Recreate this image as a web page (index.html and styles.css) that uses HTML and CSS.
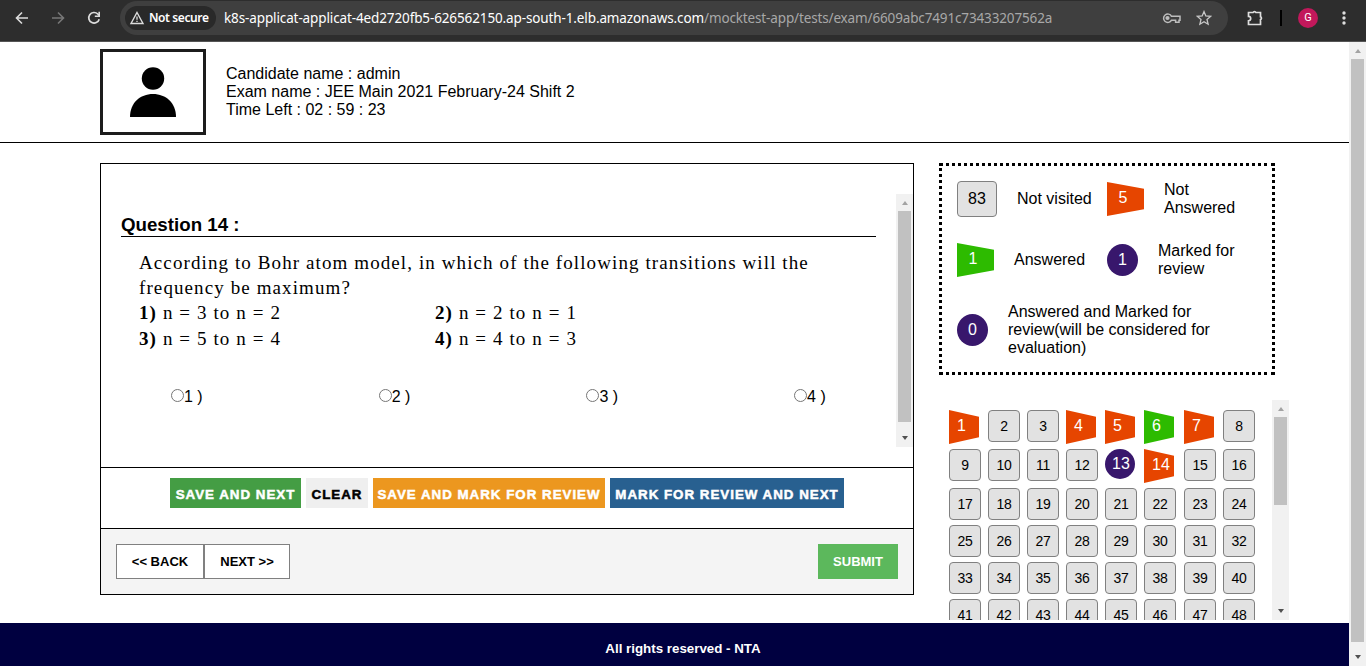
FILE: index.html
```html
<!DOCTYPE html>
<html lang="en">
<head>
<meta charset="utf-8">
<title>Mock Test</title>
<link rel="stylesheet" href="styles.css">
</head>
<body>
<div class="browser">
  <svg class="nav-icon" width="20" height="20" viewBox="0 0 20 20"><path d="M16 10H5M10 4.5L4.5 10l5.5 5.500" fill="none" stroke="#dcdcdc" stroke-width="1.6"/></svg>
  <svg class="nav-icon" width="20" height="20" viewBox="0 0 20 20"><path d="M4 10h11M10 4.500l5.500 5.500-5.500 5.500" fill="none" stroke="#777" stroke-width="1.6"/></svg>
  <svg class="nav-icon" width="20" height="20" viewBox="0 0 20 20"><path d="M15.200 11.200A5.300 5.300 0 1 1 13.800 6L15 7.300" fill="none" stroke="#dcdcdc" stroke-width="1.700"/><path d="M15.200 3.800v4.400h-4.400" fill="none" stroke="#dcdcdc" stroke-width="1.600"/></svg>
  <div class="omnibox">
    <div class="chip">
      <svg width="16" height="16" viewBox="0 0 16 16"><path d="M8 2.500L14 13.500H2z" fill="none" stroke="#dcdcdc" stroke-width="1.400"/><path d="M8 6.500v3.300M8 10.800v1.300" stroke="#dcdcdc" stroke-width="1.300"/></svg>
      <span>Not secure</span>
    </div>
    <div class="url"><span class="host">k8s-applicat-applicat-4ed2720fb5-626562150.ap-south-1.elb.amazonaws.com</span><span class="path">/mocktest-app/tests/exam/6609abc7491c73433207562a</span></div>
    <svg class="key" width="20" height="12" viewBox="0 0 20 12"><path d="M9.500 4.300h8.500v3.900h-1v2h-3.400v-2H9.500A4.200 4.200 0 1 1 9.500 4.300z" fill="none" stroke="#bdbdbd" stroke-width="1.500"/><circle cx="5.500" cy="6" r="2.100" fill="#bdbdbd"/></svg>
    <svg class="star" width="16" height="16" viewBox="0 0 16 16"><path d="M8 1.600l1.800 4.400 4.800.4-3.600 3.100 1.100 4.700L8 11.700l-4.100 2.500L5 9.500 1.400 6.400 6.200 6z" fill="none" stroke="#c8c8c8" stroke-width="1.300"/></svg>
  </div>
  <svg class="puzzle" width="18" height="18" viewBox="0 0 18 18"><path d="M2.500 3.500h4.600a1.500 1.500 0 0 1 2.800 0h4.600v4.300a1.500 1.500 0 0 1 0 2.800v4.900h-12v-3.700a2.200 2.200 0 0 0 0-4.400z" fill="none" stroke="#dedede" stroke-width="1.700"/></svg>
  <span class="divider"></span>
  <span class="avatar">G</span>
  <svg class="kebab" width="4" height="16" viewBox="0 0 4 16" fill="#dedede"><circle cx="2" cy="3" r="1.700"/><circle cx="2" cy="8" r="1.700"/><circle cx="2" cy="13" r="1.700"/></svg>
</div>
<div class="viewport">
  <div class="page">
    <header class="header">
      <div class="photo"><svg width="46" height="50" viewBox="0 0 46 50"><circle cx="23" cy="11.500" r="11.200"/><path d="M0 50C0 36 10 27 23 27s23 9 23 23z"/></svg></div>
      <div class="details"><div>Candidate name : admin</div><div>Exam name : JEE Main 2021 February-24 Shift 2</div><div>Time Left : 02 : 59 : 23</div></div>
    </header>
    <main class="main">
      <section class="card">
        <div class="question">
          <div class="question-body">
            <h3 class="title">Question 14 :</h3>
            <div class="problem">
              <div class="l1">According to Bohr atom model, in which of the following transitions will the</div>
              <div class="l2">frequency be maximum?</div>
              <div class="choices"><span><b>1)</b> n = 3 to n = 2</span><span><b>2)</b> n = 2 to n = 1</span><span><b>3)</b> n = 5 to n = 4</span><span><b>4)</b> n = 4 to n = 3</span></div>
            </div>
            <div class="options">
              <label><input type="radio" name="a"><span>1 )</span></label><label><input type="radio" name="a"><span>2 )</span></label><label><input type="radio" name="a"><span>3 )</span></label><label><input type="radio" name="a"><span>4 )</span></label>
            </div>
          </div>
          <div class="bar"><i class="up"></i><i class="thumb thumb-question"></i><i class="down"></i></div>
        </div>
        <div class="actions">
          <button class="act save">SAVE AND NEXT</button><button class="act clear">CLEAR</button><button class="act savemark">SAVE AND MARK FOR REVIEW</button><button class="act mark">MARK FOR REVIEW AND NEXT</button>
        </div>
        <div class="steps"><button class="step back">&lt;&lt; BACK</button><button class="step next">NEXT &gt;&gt;</button><button class="submit">SUBMIT</button></div>
      </section>
      <aside class="side">
        <div class="legend">
          <div class="row r1"><div class="item first"><span class="box">83</span><span>Not visited</span></div><div class="item"><span class="flag red">5</span><span>Not<br>Answered</span></div></div>
          <div class="row r2"><div class="item first"><span class="flag green">1</span><span>Answered</span></div><div class="item"><span class="dot">1</span><span>Marked for<br>review</span></div></div>
          <div class="row r3"><div class="item"><span class="dot">0</span><span>Answered and Marked for<br>review(will be considered for<br>evaluation)</span></div></div>
        </div>
        <div class="palette">
          <div class="numbers" id="numbers"></div>
          <div class="bar"><i class="up"></i><i class="thumb thumb-palette"></i><i class="down"></i></div>
        </div>
      </aside>
    </main>
    <footer class="footer">All rights reserved - NTA</footer>
  </div>
  <div class="bar"><i class="up"></i><i class="thumb thumb-page"></i><i class="down"></i></div>
</div>
<script src="palette.js"></script>
</body>
</html>
```
FILE: styles.css
```css
* { box-sizing: border-box; }
body { margin: 0; height: 666px; overflow: hidden; display: flex; flex-direction: column; background: #fff; color: #000; font: 16px/18px "Liberation Sans", Arial, sans-serif; }
button { font-family: inherit; border: 0; padding: 0; white-space: nowrap; }

.browser { height: 42px; flex: none; display: flex; align-items: center; padding: 0 0 6px 12px; background: #2d2d2d; border-bottom: 1px solid #555; }
.nav-icon { margin-right: 16px; flex: none; }
.omnibox { width: 1108px; height: 34px; margin-top: 1px; border-radius: 17px; background: #3f3f3f; display: flex; align-items: center; padding-left: 5px; flex: none; font-family: "Noto Sans", sans-serif; }
.chip { width: 91px; height: 24px; border-radius: 12px; background: #292929; display: flex; align-items: center; gap: 4px; padding-left: 4px; color: #fff; font-size: 12px; font-weight: 600; white-space: nowrap; letter-spacing: -0.4px; }
.chip svg { flex: none; }
.url { margin-left: 8px; width: 938px; display: flex; white-space: nowrap; font-size: 13.5px; }
.host { color: #fff; letter-spacing: -0.12px; }
.path { color: #a8a8a8; letter-spacing: -0.14px; }
.star { margin-left: 14px; }
.puzzle { margin-left: 18px; }
.divider { width: 2px; height: 16px; background: #000; margin-left: 16px; }
.avatar { width: 20px; height: 20px; border-radius: 50%; margin-left: 16px; background: #c2185b; color: #fff; font: 11px/20px Roboto, sans-serif; text-align: center; }
.kebab { margin-left: 24px; }

.viewport { height: 624px; display: flex; }
.page { width: 1349px; display: flex; flex-direction: column; }
.bar { width: 17px; flex: none; background: #f1f1f1; display: flex; flex-direction: column; align-items: center; }
.bar .up { width: 0; height: 0; margin: 7px 0 6px; border: 3.5px solid transparent; border-top: 0; border-bottom: 4px solid #a3a3a3; }
.bar .thumb { width: 13px; background: #c1c1c1; }
.bar .down { width: 0; height: 0; margin: auto 0 7px; border: 3.5px solid transparent; border-bottom: 0; border-top: 4px solid #505050; }
.thumb-question { height: 211px; }
.thumb-palette { height: 88px; }
.thumb-page { height: 583px; }

.header { height: 101px; display: flex; padding: 7px 0 0 100px; border-bottom: 1px solid #000; }
.photo { width: 106px; height: 86px; border: 3px solid #1c1c1c; padding: 15px 0 0 27px; }
.photo svg { display: block; }
.details { padding: 16px 0 0 20px; }

.main { display: flex; height: 480px; padding: 20px 0 0 100px; }
.card { width: 814px; height: 432px; border: 1px solid #000; }
.question { height: 303px; padding-top: 30px; display: flex; }
.question-body { width: 795px; padding: 20px 0 0 20px; }
.question .bar { height: 253px; }
.title { width: 755px; height: 23px; margin: 0; font-size: 18.72px; line-height: 21px; border-bottom: 1px solid #000; }
.problem { padding: 13px 0 0 18px; font: 19px/25px "Liberation Serif", "Times New Roman", serif; white-space: nowrap; }
.l1 { letter-spacing: 1.1px; }
.l2 { letter-spacing: 1.1px; }
.choices { display: grid; grid-template-columns: 296px 296px; letter-spacing: 1.1px; line-height: 25.5px; }
.options { display: flex; padding: 36px 0 0 50px; }
.options label { width: 207.7px; flex: none; display: flex; align-items: center; }
.options label:last-child { width: 60px; }
.options input { margin: 0 0 2px; width: 13px; height: 13px; }
.options span { padding-top: 1px; }
.actions { height: 61px; display: flex; gap: 5px; padding: 10px 0 0 69px; border-top: 1px solid #000; }
.act { height: 30px; padding-top: 2px; font-size: 13.333px; font-weight: bold; letter-spacing: 1px; color: #fff; -webkit-text-stroke: 0.5px currentColor; }
.save { width: 131px; background: #449d44; }
.clear { width: 62px; background: #efefef; color: #000; }
.savemark { width: 232px; background: #ec971f; }
.mark { width: 234px; background: #286090; }
.steps { height: 66px; display: flex; padding: 15px; background: #f4f4f4; border-top: 1px solid #000; }
.step { height: 35px; background: #fff; border: 1px solid #808080; color: #000; font-size: 13px; font-weight: bold; }
.back { width: 88px; }
.next { width: 86px; }
.submit { width: 80px; height: 35px; margin-left: auto; background: #5cb85c; color: #fff; font-size: 13px; font-weight: bold; }

.side { margin-left: 25px; width: 350px; }
.legend { width: 336px; height: 212px; border: 3px dotted #000; padding: 15px; }
.row { display: flex; align-items: center; }
.r1 { height: 36px; }
.r2 { height: 36px; margin-top: 25px; }
.r3 { height: 54px; margin-top: 25px; }
.item { display: flex; align-items: center; gap: 20px; white-space: nowrap; }
.first { width: 150px; }
.box, .cell { background: #e2e2e2; border: 1px solid #808080; border-radius: 4px; text-align: center; }
.box { width: 40px; height: 36px; line-height: 34px; }
.flag { width: 37px; height: 34px; padding-right: 5px; line-height: 31px; text-align: center; color: #fff; clip-path: polygon(0 0, 100% 20%, 100% 80%, 0 100%); }
.dot { width: 31px; height: 32px; line-height: 31px; border-radius: 50%; background: #38176c; color: #fff; text-align: center; }
.red { background: #e64500; }
.green { background: #2dbb00; }
.palette { display: flex; height: 220px; margin-top: 25px; overflow: hidden; }
.numbers { width: 333px; height: 220px; overflow: hidden; display: grid; grid-template-columns: repeat(5, 39px) 40px 39px 39px; grid-template-rows: 39px 39px 37px 37px 37px 37px; padding: 10px 0 0 10px; align-items: start; }
.cell { width: 32px; height: 32px; font-size: 14px; line-height: 31px; letter-spacing: -0.3px; }
.numbers .flag { width: 30px; }
.numbers .dot { width: 30px; height: 30px; line-height: 29px; }
.numbers .wide { padding: 0 0 0 4px; }
.numbers .dot.wide { padding: 0 0 0 2px; }
.footer { height: 43px; padding: 10px 0 0 17px; background: #000040; color: #fff; text-align: center; font-size: 13.333px; line-height: 32px; font-weight: bold; }
```
FILE: palette.js
```js
const states = { 1: 'flag red', 4: 'flag red', 5: 'flag red', 6: 'flag green', 7: 'flag red', 13: 'dot wide', 14: 'flag red wide' };
const numbers = document.getElementById('numbers');
for (let n = 1; n <= 48; n++) {
  const cell = document.createElement('span');
  cell.className = states[n] || 'cell';
  cell.textContent = n;
  numbers.append(cell);
}
```
